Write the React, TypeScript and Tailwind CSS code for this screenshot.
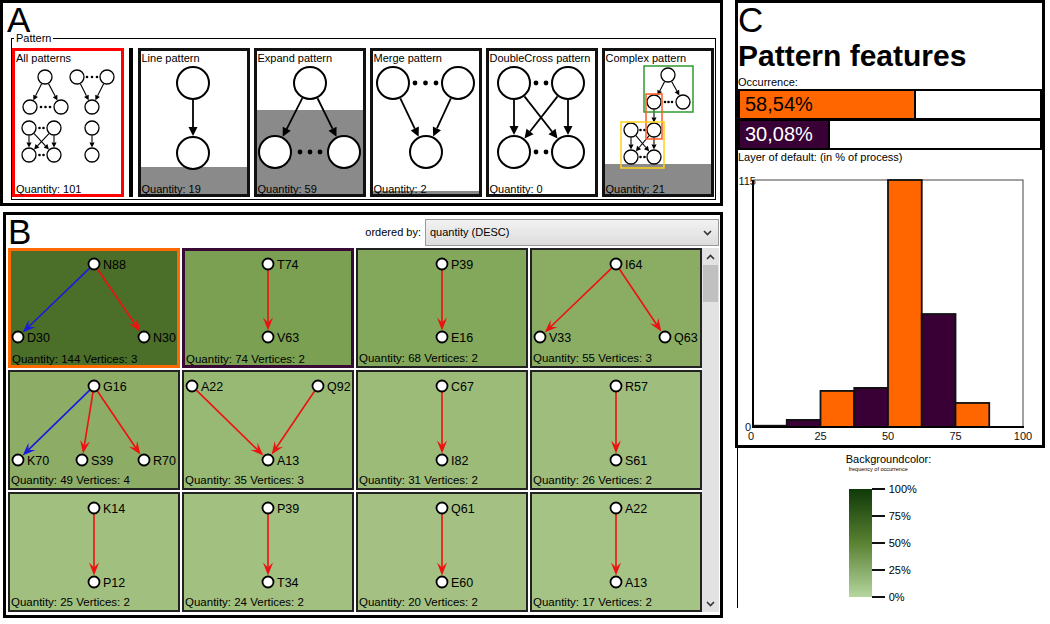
import React from "react";

type P = [number, number];

// line from a to b that stops at the node rims, plus a filled arrowhead at b
function arrowGeom(a: P, b: P, ra: number, rb: number, len: number, wid: number, notch: number) {
  const dx = b[0] - a[0];
  const dy = b[1] - a[1];
  const L = Math.hypot(dx, dy);
  const ux = dx / L;
  const uy = dy / L;
  const px = -uy;
  const py = ux;
  const sx = a[0] + ux * ra;
  const sy = a[1] + uy * ra;
  const tx = b[0] - ux * rb;
  const ty = b[1] - uy * rb;
  const bx = tx - ux * len;
  const by = ty - uy * len;
  const nx = tx - ux * (len - notch);
  const ny = ty - uy * (len - notch);
  return {
    line: [sx, sy, nx, ny],
    pts: `${tx},${ty} ${bx + px * wid},${by + py * wid} ${nx},${ny} ${bx - px * wid},${by - py * wid}`,
  };
}

function Edge(props: {
  a: P;
  b: P;
  ra: number;
  rb: number;
  color: string;
  len: number;
  wid: number;
  notch: number;
  sw: number;
}) {
  const g = arrowGeom(props.a, props.b, props.ra, props.rb, props.len, props.wid, props.notch);
  return (
    <g>
      <line x1={g.line[0]} y1={g.line[1]} x2={g.line[2]} y2={g.line[3]} stroke={props.color} strokeWidth={props.sw} />
      <polygon points={g.pts} fill={props.color} />
    </g>
  );
}

// ---------- panel A drawings ----------
const Big = ({ p }: { p: P }) => <circle cx={p[0]} cy={p[1]} r={16} fill="#fff" stroke="#000" strokeWidth={2} />;
const Small = ({ p }: { p: P }) => <circle cx={p[0]} cy={p[1]} r={7} fill="#fff" stroke="#000" strokeWidth={1.3} />;
const Dots = ({ xs, y, r }: { xs: number[]; y: number; r: number }) => (
  <>
    {xs.map((x) => (
      <circle key={x} cx={x} cy={y} r={r} fill="#000" />
    ))}
  </>
);
const BigEdge = ({ a, b }: { a: P; b: P }) => (
  <Edge a={a} b={b} ra={17} rb={17} color="#000" len={9} wid={4.5} notch={0} sw={1.8} />
);
const SmallEdge = ({ a, b }: { a: P; b: P }) => (
  <Edge a={a} b={b} ra={7.5} rb={7.5} color="#000" len={5} wid={2.6} notch={0} sw={1.1} />
);

function AllPatterns() {
  const g1: P[] = [[30, 12], [15, 42], [46, 42]];
  const g2: P[] = [[62, 12], [92, 12], [77, 42]];
  const g3: P[] = [[14, 63], [39, 63], [14, 90], [39, 90]];
  const g4: P[] = [[77, 63], [77, 90]];
  return (
    <>
      <SmallEdge a={g1[0]} b={g1[1]} />
      <SmallEdge a={g1[0]} b={g1[2]} />
      <SmallEdge a={g2[0]} b={g2[2]} />
      <SmallEdge a={g2[1]} b={g2[2]} />
      <SmallEdge a={g3[0]} b={g3[2]} />
      <SmallEdge a={g3[1]} b={g3[3]} />
      <SmallEdge a={g3[0]} b={g3[3]} />
      <SmallEdge a={g3[1]} b={g3[2]} />
      <SmallEdge a={g4[0]} b={g4[1]} />
      {[...g1, ...g2, ...g3, ...g4].map((p, i) => (
        <Small key={i} p={p} />
      ))}
      <Dots xs={[26, 30.5, 35]} y={42} r={1.3} />
      <Dots xs={[72, 77, 82]} y={12} r={1.3} />
      <Dots xs={[24.5, 28.5]} y={63} r={1.3} />
      <Dots xs={[24.5, 28.5]} y={90} r={1.3} />
    </>
  );
}

function LinePattern() {
  return (
    <>
      <BigEdge a={[52, 18]} b={[52, 88]} />
      <Big p={[52, 18]} />
      <Big p={[52, 88]} />
    </>
  );
}

function ExpandPattern() {
  return (
    <>
      <BigEdge a={[53, 18]} b={[18, 87]} />
      <BigEdge a={[53, 18]} b={[87, 87]} />
      <Big p={[53, 18]} />
      <Big p={[18, 87]} />
      <Big p={[87, 87]} />
      <Dots xs={[43, 53, 63]} y={87} r={2.4} />
    </>
  );
}

function MergePattern() {
  return (
    <>
      <BigEdge a={[20, 18]} b={[53, 87]} />
      <BigEdge a={[85, 18]} b={[53, 87]} />
      <Big p={[20, 18]} />
      <Big p={[85, 18]} />
      <Big p={[53, 87]} />
      <Dots xs={[42, 52.5, 63]} y={18} r={2.4} />
    </>
  );
}

function DoubleCross() {
  const tl: P = [25, 18];
  const tr: P = [79, 18];
  const bl: P = [25, 87];
  const br: P = [79, 87];
  return (
    <>
      <BigEdge a={tl} b={bl} />
      <BigEdge a={tr} b={br} />
      <BigEdge a={tl} b={br} />
      <BigEdge a={tr} b={bl} />
      <Big p={tl} />
      <Big p={tr} />
      <Big p={bl} />
      <Big p={br} />
      <Dots xs={[47, 57]} y={18} r={2.4} />
      <Dots xs={[47, 57]} y={87} r={2.4} />
    </>
  );
}

function ComplexPattern() {
  const top: P = [63, 10];
  const ml: P = [49, 37];
  const mr: P = [78, 37];
  const ytl: P = [26, 65];
  const ytr: P = [49, 65];
  const ybl: P = [26, 92];
  const ybr: P = [49, 92];
  return (
    <>
      <SmallEdge a={top} b={ml} />
      <SmallEdge a={top} b={mr} />
      <SmallEdge a={ml} b={ytr} />
      <SmallEdge a={ytl} b={ybl} />
      <SmallEdge a={ytr} b={ybr} />
      <SmallEdge a={ytl} b={ybr} />
      <SmallEdge a={ytr} b={ybl} />
      {[top, ml, mr, ytl, ytr, ybl, ybr].map((p, i) => (
        <Small key={i} p={p} />
      ))}
      <Dots xs={[60, 63.5, 67]} y={37} r={1.3} />
      <Dots xs={[35.5, 39.5]} y={65} r={1.3} />
      <Dots xs={[35.5, 39.5]} y={92} r={1.3} />
      <rect x={39} y={1} width={49} height={46} fill="none" stroke="#2e9a2e" strokeWidth={1.5} />
      <rect x={41} y={29} width={16} height={45} fill="none" stroke="#ff5a22" strokeWidth={1.5} />
      <rect x={16} y={57} width={43} height={46} fill="none" stroke="#ffd21a" strokeWidth={1.5} />
    </>
  );
}

function PatternCard({
  title,
  qty,
  border,
  children,
}: {
  title: string;
  qty: number;
  border: string;
  children: React.ReactNode;
}) {
  const pct = (qty / 101) * 100;
  return (
    <div
      className={`w-[112px] h-[149px] border-[3px] ${border} flex flex-col shrink-0`}
      style={{ background: qty === 101 ? "#fff" : `linear-gradient(to top, #8a8a8a ${pct}%, #ffffff ${pct}%)` }}
    >
      <div className="h-[14px] text-[11px] leading-[14px] pl-[1px]">{title}</div>
      <svg width={106} height={115} className="block">
        {children}
      </svg>
      <div className="h-[14px] text-[11px] leading-[18px] pl-[1px]">Quantity: {qty}</div>
    </div>
  );
}

// ---------- panel B data ----------
type Node = [string, number, number];
type GCard = {
  bg: string;
  border: string;
  b: number;
  qty: number;
  nodes: Node[];
  edges: [number, number, string][];
};

const RED = "#ee1111";
const BLUE = "#1a1ae0";

const cards: GCard[] = [
  { bg: "bg-[#4b6e28]", border: "border-[3px] border-[#ff6a00]", b: 3, qty: 144, nodes: [["N88", 86, 16], ["D30", 10, 89], ["N30", 136, 89]], edges: [[0, 1, BLUE], [0, 2, RED]] },
  { bg: "bg-[#7ba051]", border: "border-[3px] border-[#3a0a36]", b: 3, qty: 74, nodes: [["T74", 86, 16], ["V63", 86, 89]], edges: [[0, 1, RED]] },
  { bg: "bg-[#83a75b]", border: "border-2 border-[#222222]", b: 2, qty: 68, nodes: [["P39", 86, 16], ["E16", 86, 89]], edges: [[0, 1, RED]] },
  { bg: "bg-[#8aad63]", border: "border-2 border-[#222222]", b: 2, qty: 55, nodes: [["I64", 86, 16], ["V33", 10, 89], ["Q63", 135, 89]], edges: [[0, 1, RED], [0, 2, RED]] },
  { bg: "bg-[#8dac66]", border: "border-2 border-[#222222]", b: 2, qty: 49, nodes: [["G16", 86, 16], ["K70", 10, 90], ["S39", 74, 90], ["R70", 136, 90]], edges: [[0, 1, BLUE], [0, 2, RED], [0, 3, RED]] },
  { bg: "bg-[#98b974]", border: "border-2 border-[#222222]", b: 2, qty: 35, nodes: [["A22", 10, 16], ["Q92", 136, 16], ["A13", 86, 90]], edges: [[0, 2, RED], [1, 2, RED]] },
  { bg: "bg-[#9cbb79]", border: "border-2 border-[#222222]", b: 2, qty: 31, nodes: [["C67", 86, 16], ["I82", 86, 90]], edges: [[0, 1, RED]] },
  { bg: "bg-[#9fbd7c]", border: "border-2 border-[#222222]", b: 2, qty: 26, nodes: [["R57", 86, 16], ["S61", 86, 90]], edges: [[0, 1, RED]] },
  { bg: "bg-[#a1bf7f]", border: "border-2 border-[#222222]", b: 2, qty: 25, nodes: [["K14", 86, 16], ["P12", 86, 90]], edges: [[0, 1, RED]] },
  { bg: "bg-[#a2c080]", border: "border-2 border-[#222222]", b: 2, qty: 24, nodes: [["P39", 86, 16], ["T34", 86, 90]], edges: [[0, 1, RED]] },
  { bg: "bg-[#a4c183]", border: "border-2 border-[#222222]", b: 2, qty: 20, nodes: [["Q61", 86, 16], ["E60", 86, 90]], edges: [[0, 1, RED]] },
  { bg: "bg-[#a6c386]", border: "border-2 border-[#222222]", b: 2, qty: 17, nodes: [["A22", 86, 16], ["A13", 86, 90]], edges: [[0, 1, RED]] },
];

function GraphCard({ c }: { c: GCard }) {
  const pts: P[] = c.nodes.map((n) => [n[1] - c.b, n[2] - c.b]);
  return (
    <div className={`h-[120px] ${c.border} ${c.bg} flex flex-col`}>
      <svg width="100%" height={101} className="block overflow-visible">
        {c.edges.map(([i, j, col], k) => (
          <Edge key={k} a={pts[i]} b={pts[j]} ra={6} rb={6.5} color={col} len={13} wid={5} notch={5} sw={1.6} />
        ))}
        {c.nodes.map((n, i) => (
          <g key={i}>
            <circle cx={pts[i][0]} cy={pts[i][1]} r={5.5} fill="#fff" stroke="#000" strokeWidth={1.8} />
            <text x={pts[i][0] + 9} y={pts[i][1] + 4.5} fontSize={12.5} fill="#000" fontFamily="Liberation Sans, Arial, sans-serif">
              {n[0]}
            </text>
          </g>
        ))}
      </svg>
      <div className="mt-auto h-[15px] text-[11.5px] leading-[15px] pl-[1px] whitespace-nowrap">
        Quantity: {c.qty} Vertices: {c.nodes.length}
      </div>
    </div>
  );
}

const Chevron = ({ up }: { up?: boolean }) => (
  <svg width={9} height={6} viewBox="0 0 9 6">
    <path d={up ? "M1 5 L4.5 1.5 L8 5" : "M1 1 L4.5 4.5 L8 1"} fill="none" stroke="#333" strokeWidth={1.6} />
  </svg>
);

// ---------- panel C chart ----------
const bins: [number, number, boolean][] = [
  [0, 0.6, true],
  [12.5, 3.3, false],
  [25, 16.8, true],
  [37.5, 18.2, false],
  [50, 115, true],
  [62.5, 52.6, false],
  [75, 11.2, true],
];

function Histogram() {
  const X = (u: number) => 15 + u * 2.7;
  const Y = (v: number) => 263 - (v * 247) / 115;
  return (
    <svg width={304} height={281} className="block" fontFamily="Liberation Sans, Arial, sans-serif" fontSize={11}>
      <rect x={15} y={16} width={270} height={247} fill="#fff" stroke="#444" strokeWidth={1} />
      {bins.map(([u, v, orange]) => (
        <rect
          key={u}
          x={X(u)}
          y={Y(v)}
          width={12.5 * 2.7}
          height={263 - Y(v)}
          fill={orange ? "#ff6600" : "#380035"}
          stroke="#111"
          strokeWidth={1.8}
        />
      ))}
      <line x1={15} y1={16} x2={15} y2={264} stroke="#000" strokeWidth={2} />
      <line x1={14} y1={263} x2={286} y2={263} stroke="#000" strokeWidth={2} />
      <text x={18} y={21} textAnchor="end" fill="#111">115</text>
      <text x={13} y={267} textAnchor="end" fill="#111">0</text>
      {[0, 25, 50, 75, 100].map((u) => (
        <text key={u} x={u === 0 ? X(u) - 2 : X(u)} y={276} textAnchor="middle" fill="#111">
          {u}
        </text>
      ))}
    </svg>
  );
}

export default function App() {
  const ticks = ["100%", "75%", "50%", "25%", "0%"];
  return (
    <div className="w-[1050px] h-[624px] bg-white flex items-start font-['Liberation_Sans',Arial,sans-serif] text-black overflow-hidden">
      {/* left column: A and B */}
      <div className="w-[723px] flex flex-col shrink-0">
        {/* A */}
        <section className="h-[206px] border-[3px] border-black flex flex-col">
          <div className="h-[29px] pl-[4px] text-[35px] leading-[34px]">A</div>
          <fieldset className="ml-[8px] mr-[4px] border border-black pl-0 pr-[3px] pb-[2px] pt-[4px] min-w-0">
            <legend className="ml-[2px] px-[2px] text-[11px] leading-[12px]">Pattern</legend>
            <div className="flex items-start">
              <PatternCard title="All patterns" qty={101} border="border-[#ff0000]">
                <AllPatterns />
              </PatternCard>
              <div className="mx-[5px] w-[3.5px] h-[149px] bg-black shrink-0" />
              <div className="flex gap-[4px]">
                <PatternCard title="Line pattern" qty={19} border="border-[#111111]">
                  <LinePattern />
                </PatternCard>
                <PatternCard title="Expand pattern" qty={59} border="border-[#111111]">
                  <ExpandPattern />
                </PatternCard>
                <PatternCard title="Merge pattern" qty={2} border="border-[#111111]">
                  <MergePattern />
                </PatternCard>
                <PatternCard title="DoubleCross pattern" qty={0} border="border-[#111111]">
                  <DoubleCross />
                </PatternCard>
                <PatternCard title="Complex pattern" qty={21} border="border-[#111111]">
                  <ComplexPattern />
                </PatternCard>
              </div>
            </div>
          </fieldset>
        </section>

        {/* B */}
        <section className="mt-[6px] ml-[3px] w-[720px] h-[406px] border-[3px] border-black flex flex-col">
          <div className="h-[33px] flex justify-between">
            <div className="pl-[2px] text-[35px] leading-[33px]">B</div>
            <div className="flex items-start pt-[4px] pr-[1px]">
              <span className="text-[11px] leading-[27px] mr-[4px]">ordered by:</span>
              <div className="w-[294px] h-[27px] border border-[#9a9a9a] bg-linear-to-b from-[#f2f2f2] to-[#dddddd] flex items-center justify-between pl-[4px] pr-[6px]">
                <span className="text-[11px]">quantity (DESC)</span>
                <Chevron />
              </div>
            </div>
          </div>
          <div className="flex pl-[2px]">
            <div className="w-[694px] grid grid-cols-4 gap-[2px]">
              {cards.map((c, i) => (
                <GraphCard key={i} c={c} />
              ))}
            </div>
            <div className="w-[17px] h-[364px] bg-[#e2e2e2] flex flex-col">
              <div className="h-[17px] flex items-center justify-center">
                <Chevron up />
              </div>
              <div className="h-[37px] mx-[1px] bg-[#c0c0c0]" />
              <div className="flex-1" />
              <div className="h-[17px] flex items-center justify-center">
                <Chevron />
              </div>
            </div>
          </div>
        </section>
      </div>

      {/* right column: C and legend */}
      <div className="ml-[12px] w-[310px] flex flex-col shrink-0">
        <section className="h-[448px] border-[3px] border-black flex flex-col">
          <div className="h-[29px] text-[35px] leading-[34px]">C</div>
          <div className="h-[44px] pt-[6px] text-[30px] leading-[36px] font-bold whitespace-nowrap">Pattern features</div>
          <div className="h-[12px] text-[11px] leading-[12px]">Occurrence:</div>
          <div className="mt-[1px] w-[304px] flex flex-col">
            <div className="h-[31px] border-2 border-black flex">
              <div className="h-full bg-[#ff6600] border-r-2 border-black text-[20px] leading-[27px] pl-[5px] text-black" style={{ width: "58.54%" }}>
                58,54%
              </div>
            </div>
            <div className="-mt-[1px] h-[31px] border-2 border-black flex">
              <div className="h-full bg-[#380035] border-r-2 border-black text-[20px] leading-[27px] pl-[5px] text-white whitespace-nowrap" style={{ width: "30.08%" }}>
                30,08%
              </div>
            </div>
          </div>
          <div className="h-[14px] text-[11px] leading-[14px]">Layer of default: (in % of process)</div>
          <Histogram />
        </section>
        <div className="ml-[2px] h-[160px] border-l border-black flex justify-center">
          <div className="pt-[5px] mr-[6px] flex flex-col items-start">
            <div className="text-[11px] leading-[13px]">Backgroundcolor:</div>
            <div className="pl-[3px] text-[5.5px] leading-[6px]">frequency of occurrence</div>
            <div className="mt-[17px] pl-[3px] flex">
              <div className="w-[23px] h-[108px] bg-linear-to-b from-[#0e3a08] via-[#5a8232] to-[#b6d69e]" />
              <div className="-mt-[6px] h-[120px] flex flex-col justify-between">
                {ticks.map((t) => (
                  <div key={t} className="h-[12px] flex items-center">
                    <div className="w-[13px] h-[2px] bg-[#111]" />
                    <span className="ml-[4px] text-[11px] leading-[12px]">{t}</span>
                  </div>
                ))}
              </div>
            </div>
          </div>
        </div>
      </div>
    </div>
  );
}
